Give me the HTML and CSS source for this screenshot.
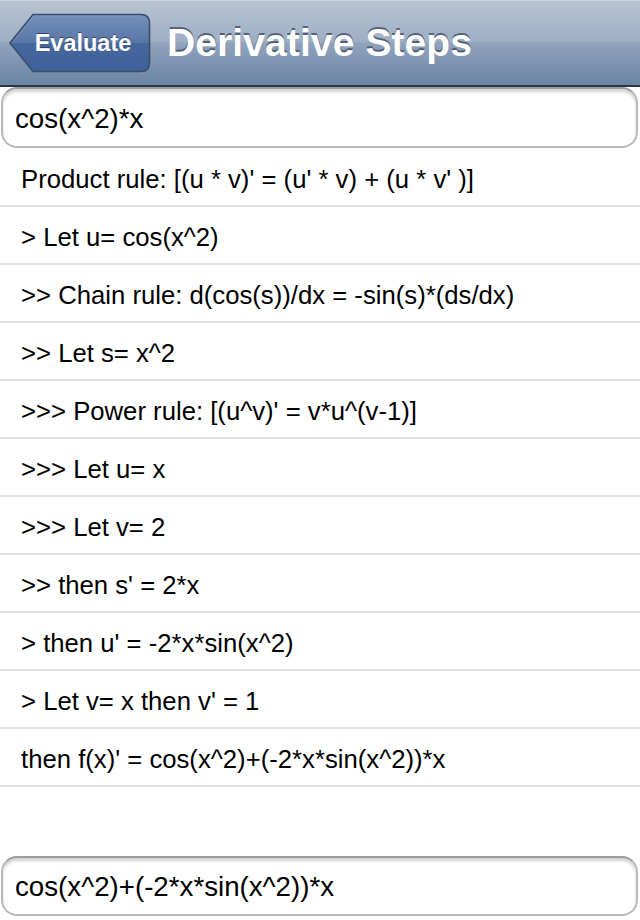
FILE: index.html
```html
<!DOCTYPE html>
<html>
<head>
<meta charset="utf-8">
<link rel="stylesheet" href="styles.css">
</head>
<body>
<div class="navbar">
  <div class="back">
    <svg class="back-shape" width="142" height="60" viewBox="0 0 142 60">
      <defs>
        <linearGradient id="bg" x1="0" y1="0" x2="0" y2="1">
          <stop offset="0" stop-color="#7590bb"/>
          <stop offset="0.5" stop-color="#5876a6"/>
          <stop offset="0.5" stop-color="#46679c"/>
          <stop offset="1" stop-color="#3f6199"/>
        </linearGradient>
      </defs>
      <path d="M1 30 L24 1.5 L132 1.5 Q140.5 1.5 140.5 10 L140.5 50 Q140.5 58.5 132 58.5 L24 58.5 Z" fill="url(#bg)" stroke="#3a4d6c" stroke-width="1.6"/>
      <path d="M3 30 L24.8 3 L132 3" fill="none" stroke="rgba(255,255,255,0.12)" stroke-width="1"/>
    </svg>
    <span class="back-label">Evaluate</span>
  </div>
  <div class="title">Derivative Steps</div>
</div>
<div class="navline"></div>
<div class="field top-field">cos(x^2)*x</div>
<div class="steps">
  <div class="row">Product rule: [(u * v)' = (u' * v) + (u * v' )]</div>
  <div class="row">&gt; Let u= cos(x^2)</div>
  <div class="row">&gt;&gt; Chain rule: d(cos(s))/dx = -sin(s)*(ds/dx)</div>
  <div class="row">&gt;&gt; Let s= x^2</div>
  <div class="row">&gt;&gt;&gt; Power rule: [(u^v)' = v*u^(v-1)]</div>
  <div class="row">&gt;&gt;&gt; Let u= x</div>
  <div class="row">&gt;&gt;&gt; Let v= 2</div>
  <div class="row">&gt;&gt; then s' = 2*x</div>
  <div class="row">&gt; then u' = -2*x*sin(x^2)</div>
  <div class="row">&gt; Let v= x then v' = 1</div>
  <div class="row">then f(x)' = cos(x^2)+(-2*x*sin(x^2))*x</div>
</div>
<div class="spacer"></div>
<div class="field bottom-field">cos(x^2)+(-2*x*sin(x^2))*x</div>
</body>
</html>
```
FILE: styles.css
```css
html, body {
  margin: 0;
  padding: 0;
  background: #ffffff;
  overflow: hidden;
}
body {
  width: 640px;
  height: 920px;
  font-family: "Liberation Sans", Arial, Helvetica, sans-serif;
  color: #000;
}
.navbar {
  height: 85px;
  display: flex;
  align-items: center;
  background: linear-gradient(to bottom, #b6c3d3 0%, #9eafc4 48%, #90a3bc 50%, #6b83a4 100%);
  border-top: 1px solid #c9d3df;
  box-sizing: border-box;
}
.back {
  position: relative;
  width: 142px;
  height: 60px;
  margin-left: 9px;
  flex: none;
}
.back-shape {
  display: block;
}
.back-label {
  position: absolute;
  left: 6px;
  top: 0;
  width: 136px;
  height: 60px;
  display: flex;
  align-items: center;
  justify-content: center;
  color: #fff;
  font-weight: bold;
  font-size: 23.5px;
  text-shadow: 0 -1px 0 rgba(20, 35, 60, 0.6);
}
.title {
  margin-left: 16px;
  color: #fff;
  font-weight: bold;
  font-size: 39px;
  letter-spacing: 0.1px;
  text-shadow: 0 -2px 0 rgba(60, 72, 92, 0.75);
}
.navline {
  height: 2px;
  background: #2c3441;
}
.field {
  box-sizing: border-box;
  height: 61px;
  margin: 0 2px 0 1px;
  border: 2px solid #b9b9b9;
  border-top-color: #9c9c9c;
  border-radius: 16px;
  box-shadow: inset 0 3px 3px rgba(0, 0, 0, 0.18);
  font-size: 27.7px;
  padding-left: 12px;
  display: flex;
  align-items: center;
  padding-top: 2px;
}
.steps {
  margin-top: 1px;
}
.row {
  box-sizing: border-box;
  height: 58px;
  border-bottom: 2px solid #e0e0e0;
  padding-left: 21px;
  font-size: 25.7px;
  display: flex;
  align-items: center;
  padding-top: 5px;
}
.spacer {
  height: 69px;
}
.bottom-field {
  height: 60px;
}
```
